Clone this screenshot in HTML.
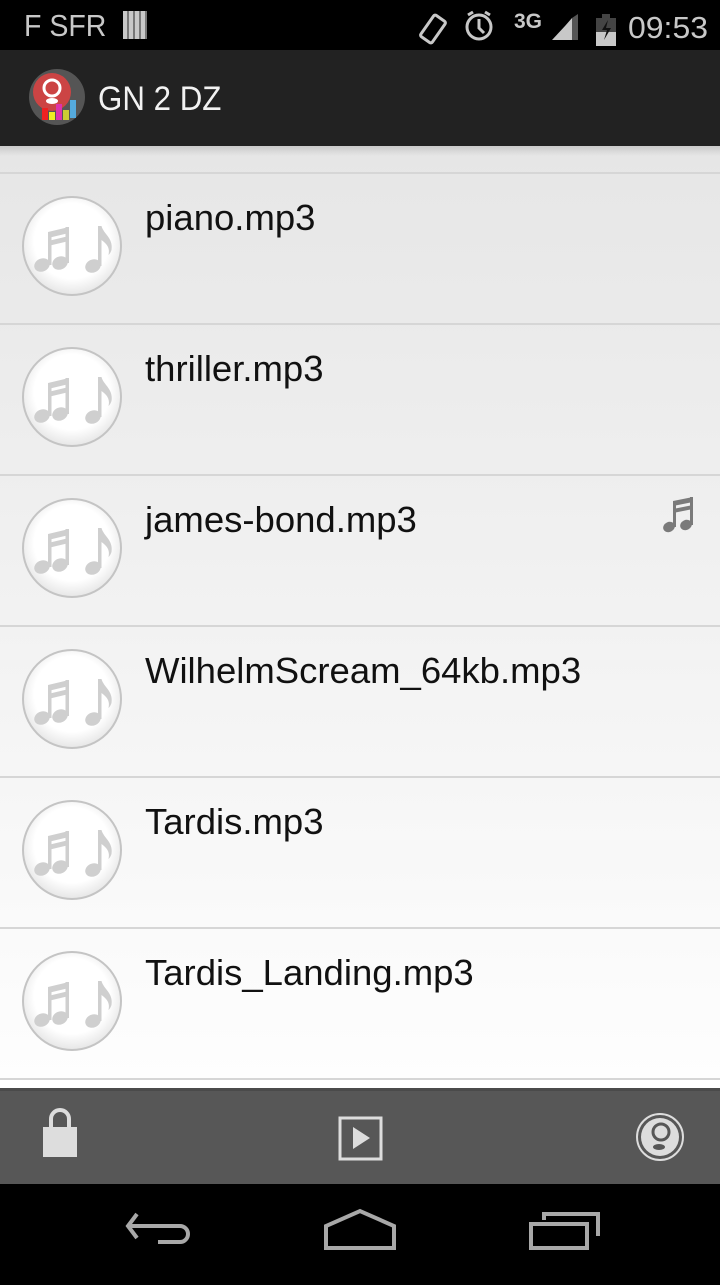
<!DOCTYPE html>
<html><head><meta charset="utf-8"><style>
*{margin:0;padding:0;box-sizing:border-box}
body{width:720px;height:1280px;overflow:hidden;position:relative;font-family:"Liberation Sans",sans-serif;background:#000}
.sb{position:absolute;top:0;left:0;width:720px;height:50px;background:#000;color:#cfcfcf}
.ab{position:absolute;top:50px;left:0;width:720px;height:96px;background:#222}
.list{position:absolute;top:146px;left:0;width:720px;height:942px;background:linear-gradient(#e6e6e6,#fefefe);overflow:hidden}
.div{position:absolute;left:0;width:720px;height:2px;background:#d6d6d6}
.row{position:absolute;left:0;width:720px;height:151px}
.row .t{position:absolute;left:145px;top:23px;font-size:36.5px;color:#111}
.row svg.c{position:absolute;left:20px;top:20px}
.bb{position:absolute;top:1088px;left:0;width:720px;height:96px;background:#575757;border-top:3px solid #4a4a4a}
.nb{position:absolute;top:1184px;left:0;width:720px;height:96px;background:#000}
</style></head><body>
<svg width="0" height="0" style="position:absolute"><defs>
<radialGradient id="g" cx="50%" cy="45%" r="55%"><stop offset="0.7" stop-color="#fff"/><stop offset="1" stop-color="#e6e6e6"/></radialGradient>
<g id="ic">
<circle cx="52" cy="52" r="49" fill="url(#g)" stroke="#c4c4c4" stroke-width="2"/>
<g fill="#cfcfcf">
<path d="M28 38l21-5v6l-21 5zM28 47l21-5v5l-21 5z"/>
<rect x="28" y="38" width="3.5" height="33"/><rect x="45.5" y="33" width="3.5" height="36"/>
<ellipse cx="22" cy="71" rx="8" ry="6.5" transform="rotate(-25 22 71)"/>
<ellipse cx="40" cy="69" rx="8" ry="6.5" transform="rotate(-25 40 69)"/>
<rect x="78" y="32" width="3.5" height="40"/>
<path d="M81.5 32c2 8 12 12 10 24c-1 3-2 4-3 5c2-8-3-12-7-15z"/>
<ellipse cx="73" cy="72" rx="8" ry="6.5" transform="rotate(-25 73 72)"/>
</g></g>
</defs></svg>
<div class="sb">
<div style="position:absolute;left:24px;top:8px;font-size:31px;color:#c8c8c8;transform:scaleX(0.92);transform-origin:left">F SFR</div>
<div style="position:absolute;left:123px;top:11px;width:24px;height:28px;background:repeating-linear-gradient(90deg,#c8c8c8 0 4px,#777 4px 6px)"></div>
<svg style="position:absolute;left:410px;top:6px" width="300" height="40" viewBox="0 0 300 40">
<g fill="none" stroke="#c8c8c8" stroke-width="3">
<rect x="16" y="10" width="14" height="26" rx="2" transform="rotate(35 23 23)"/>
<circle cx="69" cy="21" r="12"/><path d="M69 13v9l5 5M58 9l5-3M80 9l-5-3"/>
</g>
<text x="104" y="22" font-family="Liberation Sans" font-weight="bold" font-size="21" fill="#c8c8c8">3G</text>
<path d="M142 34L155 34L155 20Z" fill="#c8c8c8"/><path d="M155 34L162 34L162 12L155 20Z" fill="#c8c8c8"/><path d="M162 34L168 34L168 8L162 12Z" fill="#555"/>
<rect x="186" y="12" width="20" height="28" fill="#c8c8c8"/><rect x="186" y="12" width="20" height="14" fill="#444"/><rect x="192" y="8" width="8" height="4" fill="#444"/>
<path d="M198 14l-6 10h5l-3 10 7-12h-5z" fill="#111"/>
<text x="218" y="32" font-family="Liberation Sans" font-size="31" fill="#c8c8c8" textLength="80" lengthAdjust="spacingAndGlyphs">09:53</text>
</svg>
</div>
<div class="ab">
<svg style="position:absolute;left:28px;top:18px" width="58" height="58" viewBox="0 0 58 58">
<circle cx="29" cy="29" r="28" fill="#555"/><circle cx="24" cy="24" r="19" fill="#c44"/>
<circle cx="24" cy="20" r="8" fill="none" stroke="#fff" stroke-width="3"/><ellipse cx="24" cy="33" rx="6" ry="3" fill="#fff"/>
<rect x="14" y="40" width="6" height="12" fill="#e22"/><rect x="21" y="44" width="6" height="8" fill="#ee2"/><rect x="28" y="36" width="6" height="16" fill="#d3a"/><rect x="35" y="42" width="6" height="10" fill="#cc3"/><rect x="42" y="32" width="6" height="18" fill="#5ad"/>
</svg>
<div style="position:absolute;left:98px;top:30px;font-size:34px;color:#f2f2f2;transform:scaleX(0.92);transform-origin:left">GN 2 DZ</div>
</div>
<div class="list">
<div style="position:absolute;left:0;top:0;width:720px;height:10px;background:linear-gradient(rgba(0,0,0,.12),rgba(0,0,0,0))"></div>
<div class="div" style="top:26px"></div>
<div class="row" style="top:28px"><svg class="c" width="104" height="104"><use href="#ic"/></svg><div class="t">piano.mp3</div></div>
<div class="div" style="top:177px"></div>
<div class="row" style="top:179px"><svg class="c" width="104" height="104"><use href="#ic"/></svg><div class="t">thriller.mp3</div></div>
<div class="div" style="top:328px"></div>
<div class="row" style="top:330px"><svg class="c" width="104" height="104"><use href="#ic"/></svg><div class="t">james-bond.mp3</div>
<svg style="position:absolute;left:660px;top:20px" width="40" height="40" viewBox="0 0 40 40"><g fill="#7a7a7a"><path d="M13 5l20-4v5l-20 4zM13 13l20-4v4l-20 4z"/><rect x="13" y="5" width="3" height="26"/><rect x="30" y="1" width="3" height="28"/><ellipse cx="9" cy="31" rx="6" ry="5" transform="rotate(-25 9 31)"/><ellipse cx="26" cy="29" rx="6" ry="5" transform="rotate(-25 26 29)"/></g></svg></div>
<div class="div" style="top:479px"></div>
<div class="row" style="top:481px"><svg class="c" width="104" height="104"><use href="#ic"/></svg><div class="t">WilhelmScream_64kb.mp3</div></div>
<div class="div" style="top:630px"></div>
<div class="row" style="top:632px"><svg class="c" width="104" height="104"><use href="#ic"/></svg><div class="t">Tardis.mp3</div></div>
<div class="div" style="top:781px"></div>
<div class="row" style="top:783px"><svg class="c" width="104" height="104"><use href="#ic"/></svg><div class="t">Tardis_Landing.mp3</div></div>
<div class="div" style="top:932px"></div>
</div>
<div class="bb">
<svg width="720" height="93" viewBox="0 0 720 93">
<path d="M51 36v-8a9 9 0 0 1 18 0v8" fill="none" stroke="#ddd" stroke-width="4"/>
<rect x="43" y="36" width="34" height="30" fill="#ddd"/>
<rect x="340" y="27" width="41" height="41" fill="none" stroke="#ddd" stroke-width="3"/>
<path d="M353 36l17 11-17 11z" fill="#ddd"/>
<ellipse cx="660" cy="46" rx="23" ry="23" fill="none" stroke="#ddd" stroke-width="2"/>
<ellipse cx="660" cy="46" rx="19" ry="19" fill="#ddd"/>
<circle cx="661" cy="41" r="8" fill="none" stroke="#575757" stroke-width="3"/>
<ellipse cx="659" cy="56" rx="6" ry="3" fill="#575757"/>
</svg>
</div>
<div class="nb">
<svg width="720" height="96" viewBox="0 0 720 96">
<g fill="none" stroke="#a8a8a8" stroke-width="4">
<path d="M137 30l-9 12 9 12M128 42h52a8 8 0 0 1 0 16h-22"/>
<path d="M326 64h68v-22l-34-15-34 15z"/>
<path d="M531 64h56v-24h-56zM544 36v-6h54v22"/>
</g>
</svg>
</div>
</body></html>
